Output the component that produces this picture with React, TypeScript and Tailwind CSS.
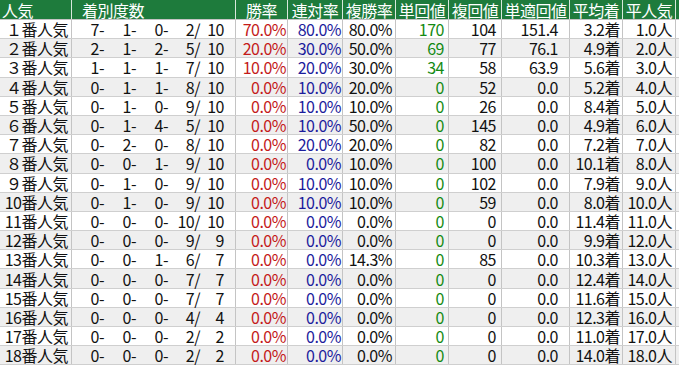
const cols =
  "grid grid-cols-[72px_164px_52px_55px_53px_53px_53px_68px_53px_53px_3px]";

type Row = {
  label: string;
  counts: string[];
  win: string;
  ren: string;
  fuku: string;
  tan: string;
  fukuKai: string;
  tekiKai: string;
  avg: string;
  pop: string;
};

const z = (label: string, counts: string[], avg: string, pop: string): Row => ({
  label,
  counts,
  win: "0.0%",
  ren: "0.0%",
  fuku: "0.0%",
  tan: "0",
  fukuKai: "0",
  tekiKai: "0.0",
  avg,
  pop,
});

const rows: Row[] = [
  { label: "１番人気", counts: ["7-", "1-", "0-", "2/", "10"], win: "70.0%", ren: "80.0%", fuku: "80.0%", tan: "170", fukuKai: "104", tekiKai: "151.4", avg: "3.2着", pop: "1.0人" },
  { label: "２番人気", counts: ["2-", "1-", "2-", "5/", "10"], win: "20.0%", ren: "30.0%", fuku: "50.0%", tan: "69", fukuKai: "77", tekiKai: "76.1", avg: "4.9着", pop: "2.0人" },
  { label: "３番人気", counts: ["1-", "1-", "1-", "7/", "10"], win: "10.0%", ren: "20.0%", fuku: "30.0%", tan: "34", fukuKai: "58", tekiKai: "63.9", avg: "5.6着", pop: "3.0人" },
  { label: "４番人気", counts: ["0-", "1-", "1-", "8/", "10"], win: "0.0%", ren: "10.0%", fuku: "20.0%", tan: "0", fukuKai: "52", tekiKai: "0.0", avg: "5.2着", pop: "4.0人" },
  { label: "５番人気", counts: ["0-", "1-", "0-", "9/", "10"], win: "0.0%", ren: "10.0%", fuku: "10.0%", tan: "0", fukuKai: "26", tekiKai: "0.0", avg: "8.4着", pop: "5.0人" },
  { label: "６番人気", counts: ["0-", "1-", "4-", "5/", "10"], win: "0.0%", ren: "10.0%", fuku: "50.0%", tan: "0", fukuKai: "145", tekiKai: "0.0", avg: "4.9着", pop: "6.0人" },
  { label: "７番人気", counts: ["0-", "2-", "0-", "8/", "10"], win: "0.0%", ren: "20.0%", fuku: "20.0%", tan: "0", fukuKai: "82", tekiKai: "0.0", avg: "7.2着", pop: "7.0人" },
  { label: "８番人気", counts: ["0-", "0-", "1-", "9/", "10"], win: "0.0%", ren: "0.0%", fuku: "10.0%", tan: "0", fukuKai: "100", tekiKai: "0.0", avg: "10.1着", pop: "8.0人" },
  { label: "９番人気", counts: ["0-", "1-", "0-", "9/", "10"], win: "0.0%", ren: "10.0%", fuku: "10.0%", tan: "0", fukuKai: "102", tekiKai: "0.0", avg: "7.9着", pop: "9.0人" },
  { label: "10番人気", counts: ["0-", "1-", "0-", "9/", "10"], win: "0.0%", ren: "10.0%", fuku: "10.0%", tan: "0", fukuKai: "59", tekiKai: "0.0", avg: "8.0着", pop: "10.0人" },
  z("11番人気", ["0-", "0-", "0-", "10/", "10"], "11.4着", "11.0人"),
  z("12番人気", ["0-", "0-", "0-", "9/", "9"], "9.9着", "12.0人"),
  { ...z("13番人気", ["0-", "0-", "1-", "6/", "7"], "10.3着", "13.0人"), fuku: "14.3%", fukuKai: "85" },
  z("14番人気", ["0-", "0-", "0-", "7/", "7"], "12.4着", "14.0人"),
  z("15番人気", ["0-", "0-", "0-", "7/", "7"], "11.6着", "15.0人"),
  z("16番人気", ["0-", "0-", "0-", "4/", "4"], "12.3着", "16.0人"),
  z("17番人気", ["0-", "0-", "0-", "2/", "2"], "11.0着", "17.0人"),
  z("18番人気", ["0-", "0-", "0-", "2/", "2"], "14.0着", "18.0人"),
];

const headers = ["勝率", "連対率", "複勝率", "単回値", "複回値", "単適回値", "平均着", "平人気"];

const cell = "flex items-center justify-end border-r border-[#c4c4c4] whitespace-nowrap";

export default function App() {
  return (
    <div className="w-[679px] h-[366px] overflow-hidden bg-white text-[16px] tracking-[-0.5px] leading-none text-[#111] font-['Noto_Sans_CJK_JP','Noto_Sans_CJK_SC',sans-serif]">
      <div className={`${cols} h-[20px] bg-[#1e7b3c] text-white border-b border-[#c4c4c4]`}>
        <div className="flex items-center pl-[2px] border-r border-[#d8e8dc]">人気</div>
        <div className="flex items-center pl-[10px] border-r border-[#d8e8dc]">着別度数</div>
        {headers.map((h) => (
          <div key={h} className="flex items-center justify-center border-r border-[#d8e8dc] whitespace-nowrap">
            {h}
          </div>
        ))}
        <div />
      </div>
      {rows.map((r, i) => (
        <div
          key={r.label}
          className={`${cols} h-[19.2px] border-b border-[#cfcfcf] ${i % 2 === 1 ? "bg-[#efefef]" : "bg-white"}`}
        >
          <div className={`${cell} pr-[3px]`}>{r.label}</div>
          <div className="flex items-center border-r border-[#c4c4c4]">
            {r.counts.slice(0, 4).map((c, j) => (
              <span key={j} className="w-[32px] text-right">{c}</span>
            ))}
            <span className="w-[24px] text-right">{r.counts[4]}</span>
          </div>
          <div className={`${cell} pr-[1px] text-[#c41a1a]`}>{r.win}</div>
          <div className={`${cell} pr-[1px] text-[#1c1c9c]`}>{r.ren}</div>
          <div className={`${cell} pr-[3px]`}>{r.fuku}</div>
          <div className={`${cell} pr-[4px] text-[#138a13]`}>{r.tan}</div>
          <div className={`${cell} pr-[5px]`}>{r.fukuKai}</div>
          <div className={`${cell} pr-[11px]`}>{r.tekiKai}</div>
          <div className={`${cell} pr-[2px]`}>{r.avg}</div>
          <div className={`${cell} pr-[3px]`}>{r.pop}</div>
          <div />
        </div>
      ))}
    </div>
  );
}
